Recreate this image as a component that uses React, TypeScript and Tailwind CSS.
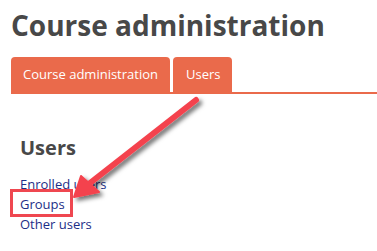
import React from "react";

export default function App() {
  return (
    <div
      className="relative w-[377px] h-[251px] bg-white overflow-hidden"
      style={{ fontFamily: '"Open Sans", sans-serif' }}
    >
      <div className="pl-[11px]">
        <h1 className="pt-[5px] text-[28px] leading-[40px] font-bold text-[#484848] tracking-[0px]">
          Course administration
        </h1>
        <div className="mt-[12px] flex items-end gap-[3px] border-b-2 border-[#ea6a4b] h-[37px]">
          <div className="h-[35px] bg-[#ea6a4b] rounded-t-[4px] px-[12px] flex items-center text-white text-[13px]">
            Course administration
          </div>
          <div className="h-[35px] bg-[#ea6a4b] rounded-t-[4px] pl-[13px] pr-[12px] flex items-center text-white text-[13px]">
            Users
          </div>
        </div>
        <div className="pl-[9px] pt-[40px]">
          <h2 className="text-[20px] leading-[28px] font-bold text-[#484848]">Users</h2>
          <div className="mt-[12px] flex flex-col text-[13px] leading-[20px] text-[#1c2e87]">
            <span>Enrolled users</span>
            <span>Groups</span>
            <span>Other users</span>
          </div>
        </div>
      </div>
      <div className="absolute left-[10px] top-[189px] w-[63px] h-[28px] border-[3px] border-[#ef4750]" />
      <svg className="absolute left-0 top-0" width="377" height="251" viewBox="0 0 377 251">
        <defs>
          <filter id="sh" x="-20%" y="-20%" width="140%" height="140%">
            <feDropShadow dx="3" dy="3" stdDeviation="2" floodColor="#000" floodOpacity="0.55" />
          </filter>
        </defs>
        <g filter="url(#sh)">
          <line x1="196" y1="100" x2="90" y2="183" stroke="#f4434e" strokeWidth="6" strokeLinecap="round" />
          <polygon points="74,197 81,176 99,192" fill="#f4434e" stroke="#f4434e" strokeWidth="2" strokeLinejoin="round" />
        </g>
      </svg>
    </div>
  );
}
